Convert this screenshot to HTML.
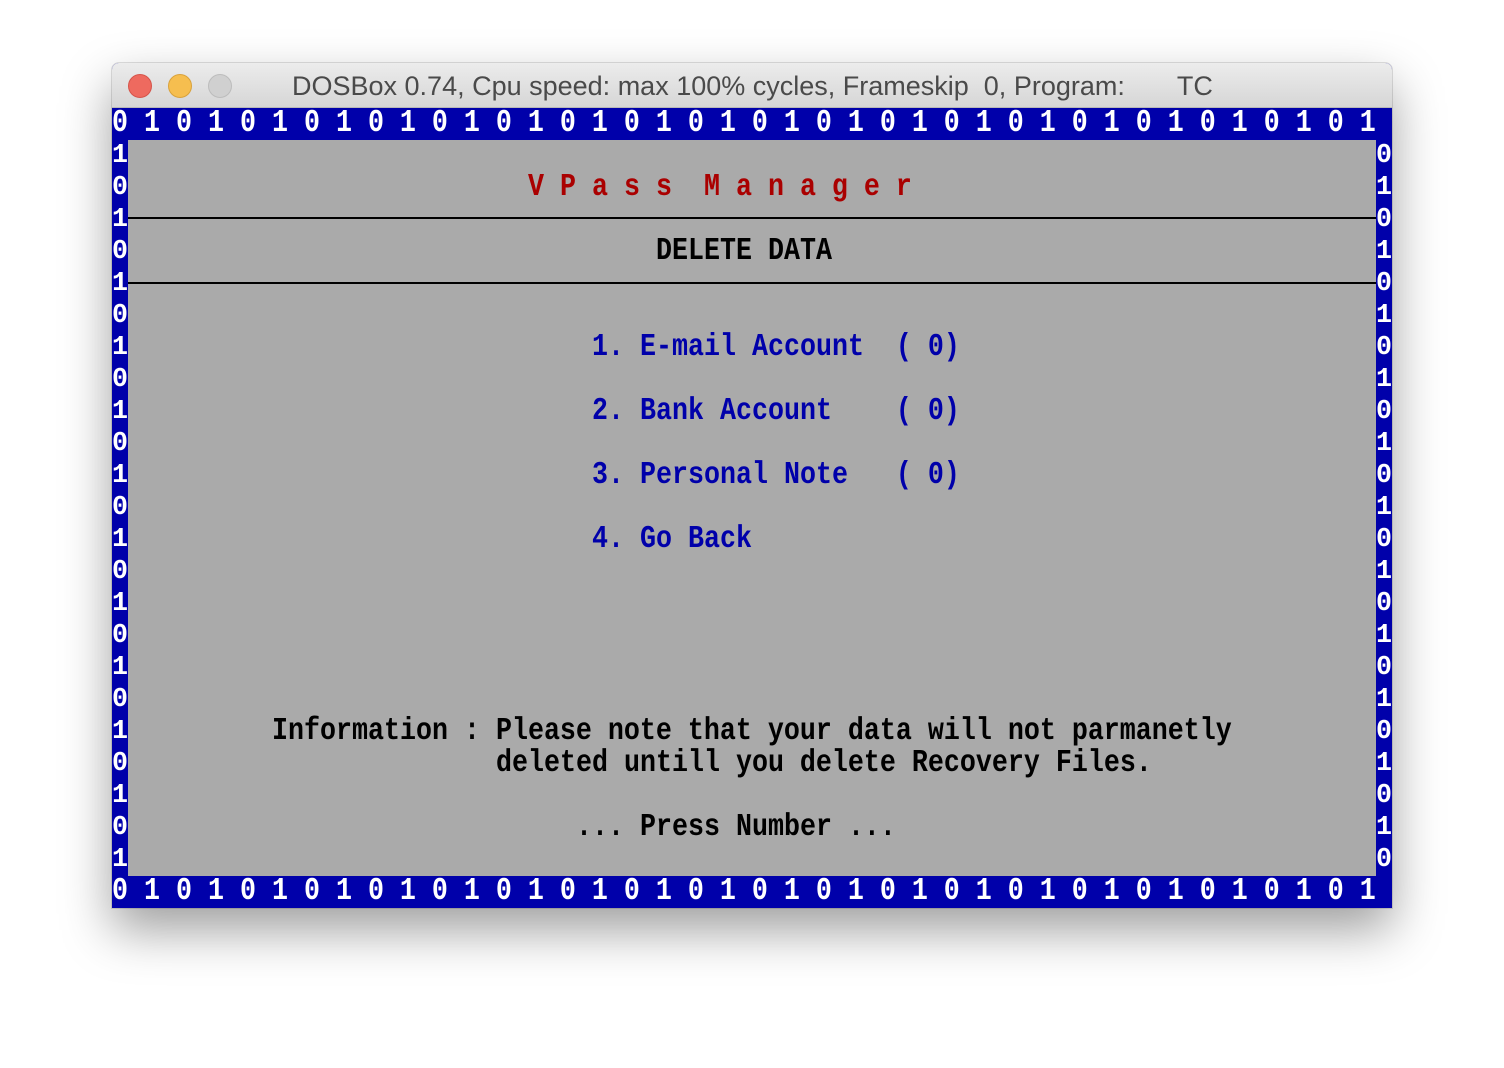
<!DOCTYPE html>
<html><head><meta charset="utf-8"><style>
html,body{margin:0;padding:0;width:1504px;height:1068px;background:#fff;overflow:hidden}
#win{position:absolute;left:112px;top:63px;width:1280px;height:845px;border-radius:7px 7px 0 0;box-shadow:0 22px 50px rgba(0,0,0,.38),0 0 0 1px rgba(0,0,0,.12);background:#0000aa}
#bar{position:absolute;left:0;top:0;width:1280px;height:45px;border-radius:7px 7px 0 0;background:linear-gradient(#ececec,#d6d6d6);border-bottom:1px solid #b8b8b8;box-sizing:border-box}
.dot{position:absolute;top:11px;width:24px;height:24px;border-radius:50%;box-sizing:border-box}
#ttl{position:absolute;left:180px;top:8px;font:27px "Liberation Sans",sans-serif;color:#4a4a4a;white-space:pre}
#scr{position:absolute;left:112px;top:108px;width:1280px;height:800px;background:#0000aa}
#gray{position:absolute;left:16px;top:32px;width:1248px;height:736px;background:#aaaaaa}
.t{position:absolute;white-space:pre;font:bold 26.667px/32px "Liberation Mono",monospace;height:32px;transform:scaleY(1.18);transform-origin:0 50%}
.w{color:#fff}.r{color:#aa0000}.b{color:#0000aa}.k{color:#000}
.ln{position:absolute;left:16px;width:1248px;height:2px;background:#000}
</style></head><body>
<div id="win">
<div id="bar">
<div class="dot" style="left:16px;background:#ee6a5f;border:1px solid #d5544a"></div>
<div class="dot" style="left:56px;background:#f6be4f;border:1px solid #d9a23b"></div>
<div class="dot" style="left:96px;background:#d0d0d0;border:1px solid #bcbcbc"></div>
<div id="ttl">DOSBox 0.74, Cpu speed: max 100% cycles, Frameskip  0, Program:<span style="margin-left:52px">TC</span></div>
</div>
</div>
<div id="scr">
<div id="gray"></div>
<div class="ln" style="top:109px"></div>
<div class="ln" style="top:174px"></div>
<div class="t w" style="left:0;top:0">0 1 0 1 0 1 0 1 0 1 0 1 0 1 0 1 0 1 0 1 0 1 0 1 0 1 0 1 0 1 0 1 0 1 0 1 0 1 0 1</div>
<div class="t w" style="left:0;top:768px">0 1 0 1 0 1 0 1 0 1 0 1 0 1 0 1 0 1 0 1 0 1 0 1 0 1 0 1 0 1 0 1 0 1 0 1 0 1 0 1</div>
<div class="t w" style="left:0;top:32px;height:736px;transform:none"><div>1</div><div>0</div><div>1</div><div>0</div><div>1</div><div>0</div><div>1</div><div>0</div><div>1</div><div>0</div><div>1</div><div>0</div><div>1</div><div>0</div><div>1</div><div>0</div><div>1</div><div>0</div><div>1</div><div>0</div><div>1</div><div>0</div><div>1</div></div>
<div class="t w" style="left:1264px;top:32px;height:736px;transform:none"><div>0</div><div>1</div><div>0</div><div>1</div><div>0</div><div>1</div><div>0</div><div>1</div><div>0</div><div>1</div><div>0</div><div>1</div><div>0</div><div>1</div><div>0</div><div>1</div><div>0</div><div>1</div><div>0</div><div>1</div><div>0</div><div>1</div><div>0</div></div>
<div class="t r" style="left:416px;top:64px">V P a s s  M a n a g e r</div>
<div class="t k" style="left:544px;top:128px">DELETE DATA</div>
<div class="t b" style="left:480px;top:224px">1. E-mail Account  ( 0)</div>
<div class="t b" style="left:480px;top:288px">2. Bank Account    ( 0)</div>
<div class="t b" style="left:480px;top:352px">3. Personal Note   ( 0)</div>
<div class="t b" style="left:480px;top:416px">4. Go Back</div>
<div class="t k" style="left:160px;top:608px">Information : Please note that your data will not parmanetly</div>
<div class="t k" style="left:384px;top:640px">deleted untill you delete Recovery Files.</div>
<div class="t k" style="left:464px;top:704px">... Press Number ...</div>
</div>
</body></html>
